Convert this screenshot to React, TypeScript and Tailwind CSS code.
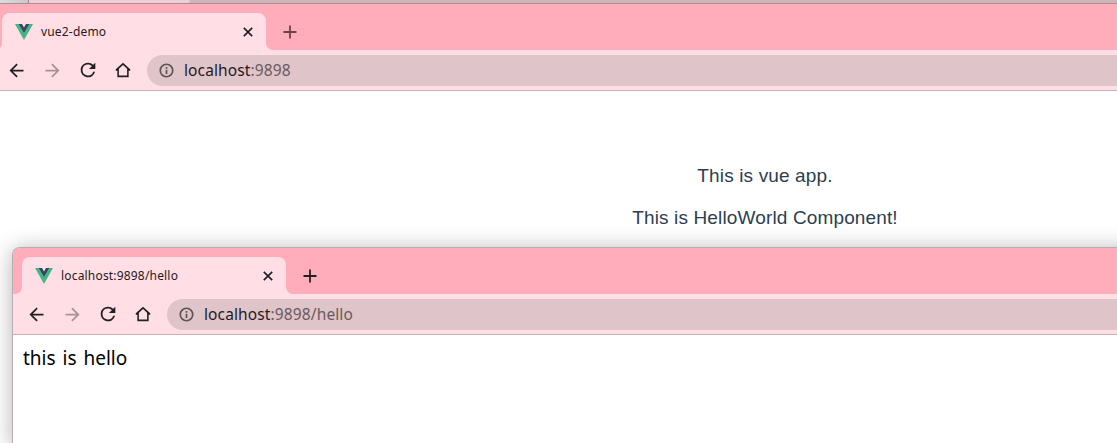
import type { ReactNode } from "react";

function VueLogo() {
  return (
    <svg className="h-4 w-[18px] shrink-0" viewBox="0 0 18 16">
      <path d="M0 0h3.6L9 9.2 14.4 0H18L9 16z" fill="#41b883" />
      <path d="M3.6 0H7l2 3.4L11 0h3.4L9 9.3z" fill="#34495e" />
    </svg>
  );
}

const icons = {
  back: "M20 11H7.83l5.59-5.59L12 4l-8 8 8 8 1.41-1.41L7.83 13H20v-2z",
  forward: "M4 11h12.17l-5.59-5.59L12 4l8 8-8 8-1.41-1.41L16.17 13H4v-2z",
  reload:
    "M17.65 6.35A7.96 7.96 0 0 0 12 4a8 8 0 1 0 7.73 10h-2.08A6 6 0 1 1 12 6c1.66 0 3.14.69 4.22 1.78L13 11h7V4z",
  home: "M12 3.2L3.3 11.2V13H5.2v7.7h13.6V13h1.9v-1.8zM12 5.9l4.9 4.6v8.1H7.1v-8.1z",
  info: "M10.8 17h2.4v-6h-2.4v6zM12 2a10 10 0 1 0 0 20 10 10 0 0 0 0-20zm0 17.6a7.6 7.6 0 1 1 0-15.2 7.6 7.6 0 0 1 0 15.2zM10.8 9.4h2.4V7h-2.4v2.4z",
};

function Icon({ name, className }: { name: keyof typeof icons; className: string }) {
  return (
    <svg className={`shrink-0 ${className}`} viewBox="0 0 24 24" fill="currentColor" fillRule="evenodd">
      <path d={icons[name]} />
    </svg>
  );
}

type BrowserProps = {
  title: string;
  path: string;
  plusClass: string;
  children: ReactNode;
};

function Browser({ title, path, plusClass, children }: BrowserProps) {
  return (
    <div className="flex h-full flex-col">
      <div className="flex h-[46px] shrink-0 items-end bg-[#ffadbb]">
        <div className="flex h-[37px] w-[9px] items-end bg-[#ffdfe5]">
          <div className="h-full w-full rounded-br-[7px] bg-[#ffadbb]" />
        </div>
        <div className="flex h-[37px] w-[264px] items-center rounded-t-[8px] bg-[#ffdfe5] pr-[13px] pl-[13px]">
          <VueLogo />
          <span className="ml-2 whitespace-nowrap font-['Noto_Sans',sans-serif] text-[12px] leading-4 tracking-[0.18px] text-[#27191c]">
            {title}
          </span>
          <svg className="ml-auto size-[10px]" viewBox="0 0 10 10" stroke="#202124" strokeWidth="1.7">
            <path d="M.8.8l8.4 8.4M9.2.8L.8 9.2" />
          </svg>
        </div>
        <div className="flex h-[37px] flex-1 bg-[#ffdfe5]">
          <div className="flex w-full items-center rounded-bl-[7px] bg-[#ffadbb] pl-[17px]">
            <svg className={`size-[14px] ${plusClass}`} viewBox="0 0 14 14" stroke="currentColor" strokeWidth="1.8">
              <path d="M7 .5v13M.5 7h13" />
            </svg>
          </div>
        </div>
      </div>
      <div className="flex h-[41px] shrink-0 items-center border-b border-[#cbb1b6] bg-[#ffdfe5] pl-[13px] text-[#202124]">
        <Icon name="back" className="size-[21px]" />
        <Icon name="forward" className="ml-[15px] size-[21px] text-[#a79297]" />
        <Icon name="reload" className="ml-[14px] size-[22px]" />
        <Icon name="home" className="ml-[14px] size-5" />
        <div className="ml-[14px] flex h-[31px] flex-1 items-center rounded-l-full bg-[#dfc4c9] pl-[11px]">
          <Icon name="info" className="size-[17px] text-[#5c5457]" />
          <span className="ml-[9px] whitespace-nowrap font-['Noto_Sans',sans-serif] text-[15.5px] leading-5 tracking-[0.12px] text-[#27191c]">
            localhost<span className="text-[#6a5a5e]">{path}</span>
          </span>
        </div>
      </div>
      <div className="flex-1 bg-white">{children}</div>
    </div>
  );
}

export default function App() {
  return (
    <div className="relative flex h-[443px] w-[1117px] flex-col overflow-hidden bg-white">
      <div className="flex h-[3px] shrink-0 bg-[#ecd0d5]">
        <div className="w-[28px] bg-gradient-to-r from-[#dadcdc] to-[#c8c8c8]" />
        <div className="w-px bg-[#98898c]" />
        <div className="ml-[160px] flex-1 rounded-tl-full bg-[#cdb4b9]" />
      </div>
      <div className="-ml-[7px] flex-1 border-t border-[#ac8f95]">
        <Browser title="vue2-demo" path=":9898" plusClass="text-[#66454b]">
          <div className="flex flex-col items-center gap-[18px] pt-[73px] pr-[3px] pl-[423px] font-['Liberation_Sans',sans-serif] text-[19px] leading-6 tracking-[0.14px] text-[#2c3e50]">
            <p>This is vue app.</p>
            <p>This is HelloWorld Component!</p>
          </div>
        </Browser>
      </div>
      <div className="absolute top-[247px] left-[12px] h-[200px] w-[1130px] overflow-hidden rounded-tl-[8px] border-t border-l border-[#b6adaf] bg-white shadow-[0_2px_22px_rgba(0,0,0,0.3)]">
        <Browser title="localhost:9898/hello" path=":9898/hello" plusClass="text-[#202124]">
          <p className="pt-[9px] pl-[10px] font-['Noto_Sans',sans-serif] text-[19px] leading-7 [word-spacing:2px] text-black">this is hello</p>
        </Browser>
      </div>
    </div>
  );
}
